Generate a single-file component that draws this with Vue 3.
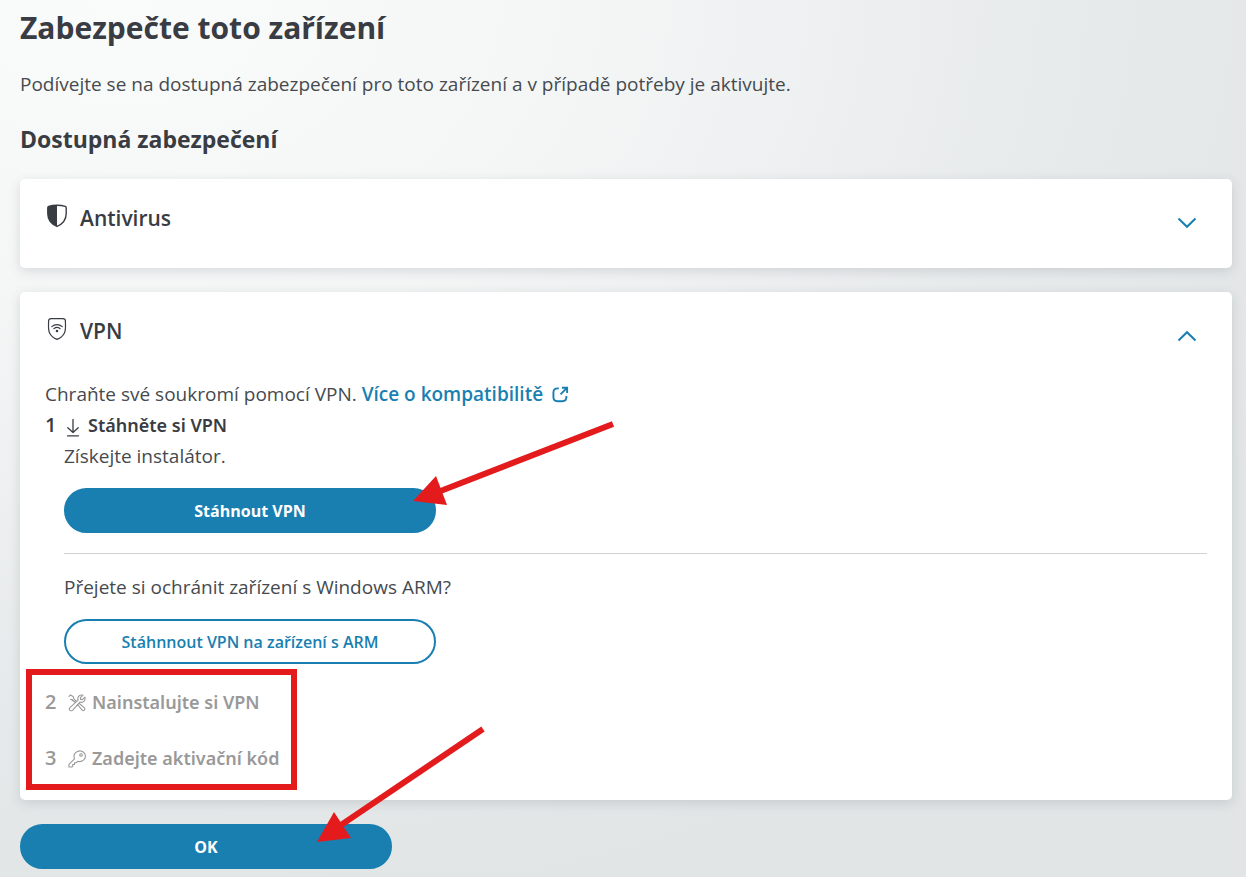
<script setup>
import { ref } from 'vue'

const antivirusOpen = ref(false)
const vpnOpen = ref(true)
</script>

<template>
  <main class="page">
    <h1>Zabezpečte toto zařízení</h1>
    <p class="lead">Podívejte se na dostupná zabezpečení pro toto zařízení a v případě potřeby je aktivujte.</p>
    <h2>Dostupná zabezpečení</h2>

    <section class="card">
      <h3>
        <button class="card-head" type="button" :aria-expanded="antivirusOpen" @click="antivirusOpen = !antivirusOpen">
          <svg class="shield" viewBox="0 0 20 24" width="20" height="24" aria-hidden="true">
            <path d="M10 1.2C7 1.2 4 1.6 1.7 2.4Q.8 2.8.8 3.8V9.500C.8 15.500 4.200 19.900 10 22.400C15.800 19.900 19.200 15.500 19.200 9.500V3.800Q19.200 2.800 18.300 2.400C16 1.600 13 1.200 10 1.200Z" fill="none" stroke="currentColor" stroke-width="1.4" />
            <path d="M10 1.200C7 1.200 4 1.600 1.700 2.400Q.8 2.800.8 3.800V9.500C.8 15.500 4.200 19.900 10 22.400Z" fill="currentColor" />
          </svg>
          <span class="card-title">Antivirus</span>
          <svg class="chevron" viewBox="0 0 20 12" width="20" height="12" aria-hidden="true">
            <path d="M1.500 1.500L10 9.800L18.500 1.500" />
          </svg>
        </button>
      </h3>
    </section>

    <section class="card">
      <h3>
        <button class="card-head" type="button" :aria-expanded="vpnOpen" @click="vpnOpen = !vpnOpen">
          <svg class="shield" viewBox="0 0 20 24" width="20" height="24" fill="none" stroke="currentColor" stroke-width="1.2" stroke-linecap="round" aria-hidden="true">
            <path d="M10 1.600H4.200Q1.600 1.800 1.600 3.800C1.600 9 .9 12.500 2.600 16C4.200 19.300 7 21.300 10 22.400C13 21.300 15.800 19.300 17.400 16C19.100 12.500 18.400 9 18.400 3.800Q18.400 1.800 15.800 1.600Z" />
            <path d="M4.800 9.600C7.800 6.900 12.200 6.900 15.200 9.600M6.900 11.700C8.700 10.200 11.300 10.200 13.100 11.700" />
            <circle cx="10" cy="14" r=".7" fill="currentColor" />
          </svg>
          <span class="card-title">VPN</span>
          <svg class="chevron" viewBox="0 0 20 12" width="20" height="12" aria-hidden="true">
            <path d="M1.500 10.500L10 2.200L18.500 10.500" />
          </svg>
        </button>
      </h3>

      <div v-if="vpnOpen" class="card-body">
        <p class="intro">
          Chraňte své soukromí pomocí VPN.
          <a href="#kompatibilita">Více o kompatibilitě
            <svg class="external" viewBox="0 0 18 18" width="17" height="17" aria-hidden="true">
              <path d="M7.200 2.500H6Q1.500 2.500 1.500 7V12Q1.500 16.200 6 16.200H11Q15.200 16.200 15.200 12V10.500M10.500 1.800H16V7.300M15.800 2L9 8.800" />
            </svg>
          </a>
        </p>

        <ol class="steps">
          <li class="first">
            <div class="step current">
              <span class="num">1</span>
              <svg viewBox="0 0 18 20" width="18" height="20" fill="none" stroke="currentColor" stroke-width="1.300" stroke-linecap="round" stroke-linejoin="round" aria-hidden="true">
                <path d="M9 1.500V14.500M3.800 9.800L9 14.500L14.200 9.800M3.500 17.800H14.500" />
              </svg>
              <strong>Stáhněte si VPN</strong>
            </div>
            <div class="details">
              <p>Získejte instalátor.</p>
              <button class="btn primary" type="button">Stáhnout VPN</button>
              <hr />
              <p>Přejete si ochránit zařízení s Windows ARM?</p>
              <button class="btn outline" type="button">Stáhnnout VPN na zařízení s ARM</button>
            </div>
          </li>
          <li class="step pending">
            <span class="num">2</span>
            <svg viewBox="0 0 18 18" width="18" height="18" fill="none" stroke="currentColor" stroke-width="1.100" stroke-linecap="round" stroke-linejoin="round" aria-hidden="true">
              <path d="M1 2.300L2.500 1L5.400 2.800L5.700 4.500L8.200 7.200M7.200 8.200L4.400 5.700L2.700 5.400ZM9.500 10.500L13.700 15.700Q14.900 17.200 16.300 16.100Q17.500 14.900 16.100 13.600L11.300 9.500M15 1.200Q12.400.5 10.600 2.300Q9.300 3.900 10.100 6.200L2 13.600Q.7 15.100 1.900 16.300Q3.200 17.400 4.700 16.100L11.900 8.100Q14.200 8.900 15.900 7.300Q17.600 5.600 16.900 3.100L14.300 5.600L12.500 5.400L12.400 3.700Z" />
            </svg>
            <strong>Nainstalujte si VPN</strong>
          </li>
          <li class="step pending">
            <span class="num">3</span>
            <svg viewBox="0 0 18 18" width="18" height="18" fill="none" stroke="currentColor" stroke-width="1.100" stroke-linecap="round" stroke-linejoin="round" aria-hidden="true">
              <path d="M6.500 8.800C5.400 5.700 6.700 2.700 9.500 1.400C12.200.2 15.500 1.200 16.800 3.800C18.100 6.600 16.900 9.900 14.100 11.100Q11.900 12 9.600 11.300L8.300 12.700H6.500V14.500H4.700V16.300L3.700 17H.9V14.300Z" />
              <circle cx="13" cy="5" r="1.300" />
            </svg>
            <strong>Zadejte aktivační kód</strong>
          </li>
          <li class="frame" aria-hidden="true"></li>
        </ol>
      </div>

      <svg class="arrow arrow-download" viewBox="0 0 202 86" width="202" height="86" aria-hidden="true">
        <path d="M200 4L25 72" /><polygon points="0,81 23,56 34,85" />
      </svg>
      <svg class="arrow arrow-ok" viewBox="0 0 170 120" width="170" height="120" aria-hidden="true">
        <path d="M166 5L24 101" /><polygon points="0,118 17,88 34,114" />
      </svg>
    </section>

    <button class="btn primary" type="button">OK</button>
  </main>
</template>

<style>
html {
  min-height: 100%;
  background: radial-gradient(ellipse 105% 105% at 10% 0, #fafbfb 0%, #f4f6f6 35%, #e8ebec 70%, #e1e5e6 100%);
}
body { margin: 0; }
</style>

<style scoped>
.page {
  box-sizing: border-box;
  padding: 6px 14px 8px 20px;
  font-family: "Segoe UI", "Open Sans", "Noto Sans", sans-serif;
  font-size: 19px;
  line-height: 30px;
  color: #464a4e;
}
h1, h2, h3, p, ol { margin: 0; padding: 0; }
h1 { font-size: 30px; line-height: 44px; font-weight: 700; color: #393c43; }
h2 { font-size: 23px; line-height: 32px; font-weight: 700; color: #393c43; margin-bottom: 24px; }
.lead { margin: 19px 0 24px; }
.card {
  position: relative;
  background: #fff;
  border-radius: 5px;
  box-shadow: 0 3px 12px rgba(60, 70, 75, 0.16);
  margin-bottom: 24px;
}
.card-head {
  display: flex;
  align-items: center;
  width: 100%;
  height: 89px;
  padding: 0 35px 11px 27px;
  border: 0;
  background: none;
  font: inherit;
  color: #393c43;
  text-align: left;
  cursor: pointer;
}
.card-title { flex: 1; font-size: 21px; line-height: 30px; font-weight: 600; margin-left: 13px; }
.shield { margin-bottom: 5px; }
.chevron { margin-top: 10px; fill: none; stroke: #197fb1; stroke-width: 2; }
.card-body { padding: 0 25px 26px; margin-top: -2px; }
a { color: #197fb1; font-weight: 600; text-decoration: none; }
.external { margin-left: 4px; vertical-align: -2px; fill: none; stroke: currentColor; stroke-width: 2; }
.steps { position: relative; list-style: none; }
.step { display: flex; align-items: center; height: 32px; }
.step strong { font-family: "Segoe UI", "Noto Sans", "Open Sans", sans-serif; font-size: 18px; font-weight: 600; }
.num { width: 19px; font-size: 20px; font-weight: 600; }
.current { color: #393c43; }
.current svg { margin-right: 6px; margin-top: 6px; }
.pending { color: #999; margin-top: 24px; }
.pending svg { margin: 2px 6px 0 4px; }
.first { margin-bottom: -2px; }
.details { padding-left: 19px; }
.btn {
  display: block;
  box-sizing: border-box;
  width: 100%;
  max-width: 372px;
  height: 45px;
  border: 2px solid #197fb1;
  border-radius: 23px;
  font: 600 16px/24px "Segoe UI", "Open Sans", "Noto Sans", sans-serif;
  cursor: pointer;
}
.details .btn { margin-top: 17px; }
.primary { background: #197fb1; color: #fff; font-weight: 700; }
.outline { background: #fff; color: #197fb1; }
hr { border: 0; border-top: 1px solid #cfd1d2; margin: 20px 0 18px; }
.frame {
  position: absolute;
  left: -19px;
  bottom: -16px;
  width: 271px;
  height: 121px;
  box-sizing: border-box;
  border: 6px solid #e31b1d;
  pointer-events: none;
}
.arrow { position: absolute; pointer-events: none; z-index: 2; fill: #e31b1d; }
.arrow path { stroke: #e31b1d; stroke-width: 6; }
.arrow-download { left: 393px; top: 128px; }
.arrow-ok { left: 297px; bottom: -44px; }
</style>
